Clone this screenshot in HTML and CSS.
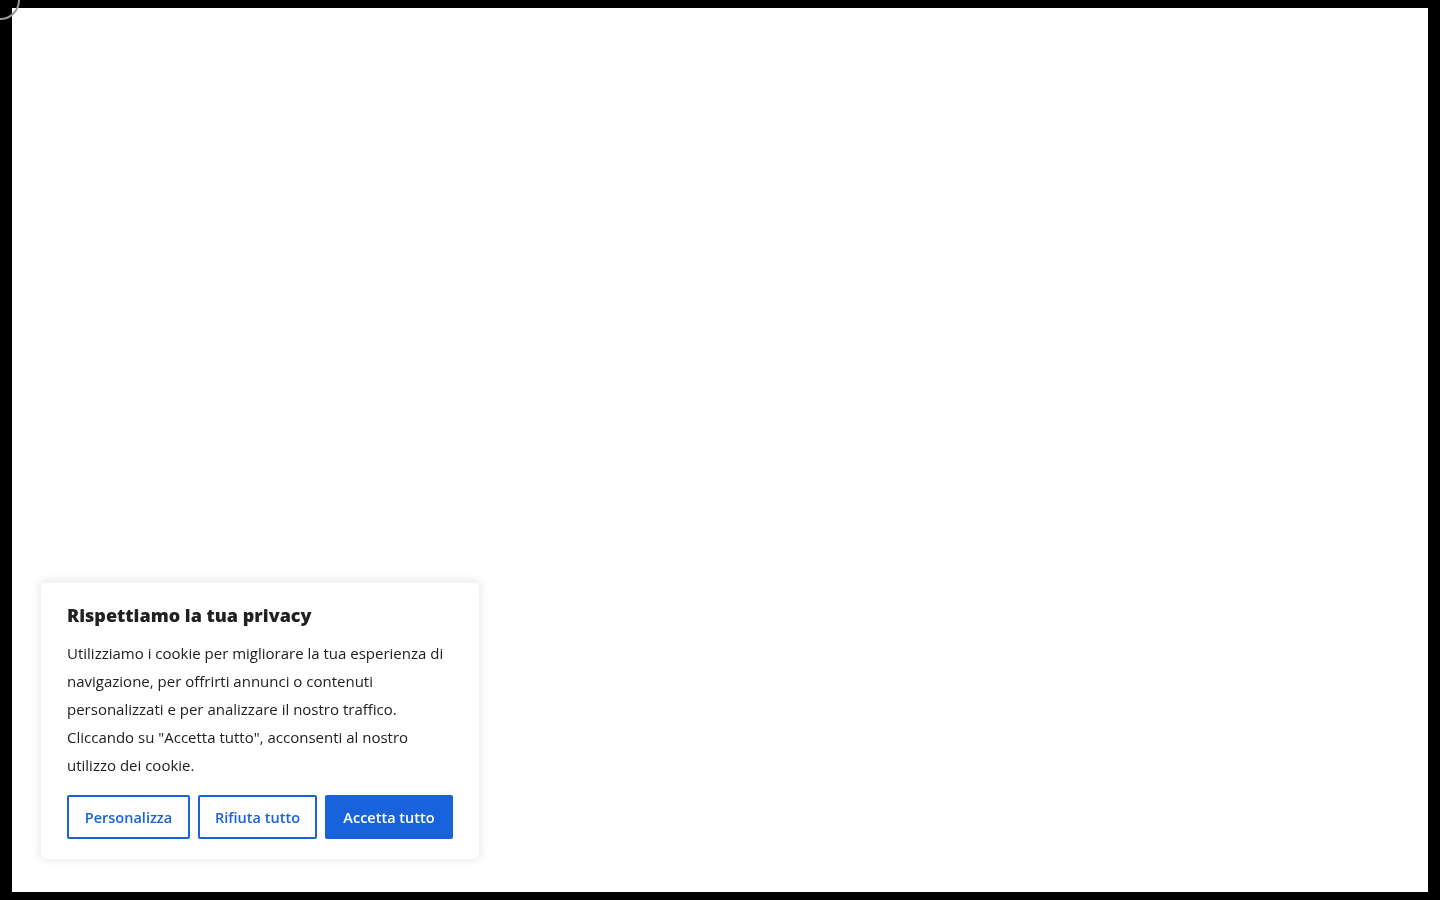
FILE: index.html
```html
<!DOCTYPE html>
<html lang="it">
<head>
<meta charset="utf-8">
<title>Privacy</title>
<link rel="stylesheet" href="styles.css">
</head>
<body>
<div class="loader" aria-hidden="true"></div>

<div class="consent" role="dialog" aria-label="Rispettiamo la tua privacy">
  <h2 class="consent-title">Rispettiamo la tua privacy</h2>
  <p class="consent-text">Utilizziamo i cookie per migliorare la tua esperienza di navigazione, per offrirti annunci o contenuti personalizzati e per analizzare il nostro traffico. Cliccando su "Accetta tutto", acconsenti al nostro utilizzo dei cookie.</p>
  <div class="consent-actions">
    <button class="btn btn-outline btn-custom">Personalizza</button>
    <button class="btn btn-outline btn-reject">Rifiuta tutto</button>
    <button class="btn btn-solid btn-accept">Accetta tutto</button>
  </div>
</div>
</body>
</html>
```

FILE: styles.css
```css
html {
  background: #000;
}

body {
  margin: 8px 12px;
  height: 884px;
  background: #fff;
  font-family: "Open Sans", "Noto Sans", sans-serif;
  color: #212121;
}

/* spinner ring peeking from the top-left corner */
.loader {
  position: fixed;
  top: -20px;
  left: -20px;
  width: 36px;
  height: 36px;
  border: 2px solid #9a9a9a;
  border-radius: 50%;
}

.consent {
  position: fixed;
  left: 40px;
  bottom: 40px;
  width: 440px;
  box-sizing: border-box;
  padding: 20px 26px;
  background: #fff;
  border: 1px solid #f4f4f4;
  border-radius: 6px;
  box-shadow: 0 -1px 10px 0 rgba(172, 171, 171, 0.3);
}

.consent-title {
  margin: 0;
  font-size: 18px;
  line-height: 24px;
  font-weight: 800;
  color: #212121;
}

.consent-text {
  margin: 12px 0 0;
  font-size: 15px;
  line-height: 28px;
  color: #212121;
}

.consent-actions {
  display: flex;
  gap: 8px;
  margin-top: 16px;
}

.btn {
  box-sizing: border-box;
  height: 44px;
  padding: 0 12px;
  border: 2px solid #1863dc;
  border-radius: 2px;
  font-family: inherit;
  font-size: 14.5px;
  font-weight: 600;
  cursor: pointer;
}

.btn-outline {
  background: #fff;
  color: #1863dc;
}

.btn-solid {
  background: #1863dc;
  color: #fff;
}

.btn-custom { width: 123px; }
.btn-reject { width: 119px; }
.btn-accept { width: 128px; }
```
